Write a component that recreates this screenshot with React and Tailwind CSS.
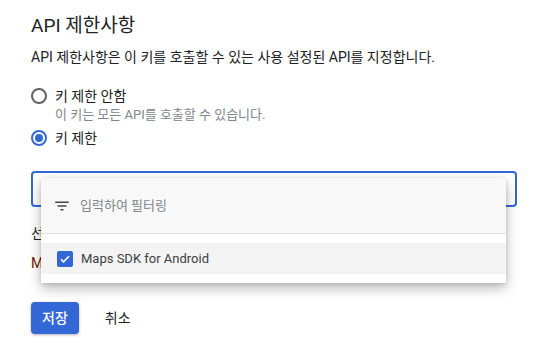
import React from 'react';

const FONT = 'font-["Roboto","Noto_Sans_CJK_KR",sans-serif]';

const Radio = ({ checked }) => (
    <span
        className={`flex items-center justify-center w-[16px] h-[16px] rounded-full border-2 ${checked ? 'border-[#3367d6]' : 'border-[#616161]'}`}
    >
        {checked && <span className="w-[8px] h-[8px] rounded-full bg-[#3367d6]" />}
    </span>
);

const FilterIcon = () => (
    <svg width="18" height="18" viewBox="0 0 24 24" fill="#444746">
        <path d="M10 18h4v-2h-4v2zM3 6v2h18V6H3zm3 7h12v-2H6v2z" />
    </svg>
);

const CheckBox = () => (
    <span className="flex items-center justify-center w-[16px] h-[16px] rounded-[2px] bg-[#3367d6]">
        <svg width="12" height="12" viewBox="0 0 24 24" fill="none" stroke="white" strokeWidth="3.2">
            <path d="M4 12.5l5 5L20 6.5" />
        </svg>
    </span>
);

export default function App() {
    return (
        <div className={`relative w-[542px] h-[345px] overflow-hidden bg-white pl-[31px] text-[#202124] ${FONT}`}>
            {/* Title */}
            <h2 className="mt-[14px] text-[19px] leading-[24px] font-normal">API 제한사항</h2>
            <p className="mt-[9px] text-[14px] leading-[20px]">
                API 제한사항은 이 키를 호출할 수 있는 사용 설정된 API를 지정합니다.
            </p>

            {/* Radio options */}
            <div className="mt-[20px]">
                <div className="flex items-center gap-[8px] h-[18px]">
                    <Radio />
                    <span className="text-[14px] leading-[18px]">키 제한 안함</span>
                </div>
                <div className="mt-[2px] pl-[24px] text-[13px] leading-[15px] text-[#80868b]">
                    이 키는 모든 API를 호출할 수 있습니다.
                </div>
                <div className="mt-[7px] flex items-center gap-[8px] h-[18px]">
                    <Radio checked />
                    <span className="text-[14px] leading-[18px]">키 제한</span>
                </div>
            </div>

            {/* Select box with open menu */}
            <div className="relative mt-[24px] w-[486px] h-[36px] rounded-[4px] border-2 border-[#3367d6]">
                <div className="absolute left-[8px] top-[5px] w-[465px] bg-white shadow-[0_5px_12px_rgba(0,0,0,0.28),0_1px_4px_rgba(0,0,0,0.12)] z-10">
                    <div className="flex items-center h-[56px] bg-[#f8f8f8] border-b border-[#e0e0e0] pl-[12px]">
                        <FilterIcon />
                        <span className="ml-[9px] text-[13px] text-[#80868b]">입력하여 필터링</span>
                    </div>
                    <div className="py-[9px]">
                        <div className="flex items-center h-[31px] bg-[#f3f3f3] pl-[16px]">
                            <CheckBox />
                            <span className="ml-[8px] text-[13px] text-[#3c4043]">Maps SDK for Android</span>
                        </div>
                    </div>
                </div>
            </div>

            {/* Selected APIs (under the menu) */}
            <div className="mt-[16px] text-[14px] leading-[20px]">선택된 API</div>
            <div className="mt-[10px] text-[14px] leading-[20px] text-[#6d1a00]">Maps SDK</div>

            {/* Actions */}
            <div className="mt-[29px] flex items-center">
                <button className="h-[32px] px-[11px] rounded-[4px] bg-[#3367d6] text-white text-[14px] font-medium shadow-[0_1px_3px_rgba(0,0,0,0.3)]">
                    저장
                </button>
                <button className="ml-[10px] h-[32px] px-[16px] text-[14px] text-[#202124]">
                    취소
                </button>
            </div>
        </div>
    );
}
